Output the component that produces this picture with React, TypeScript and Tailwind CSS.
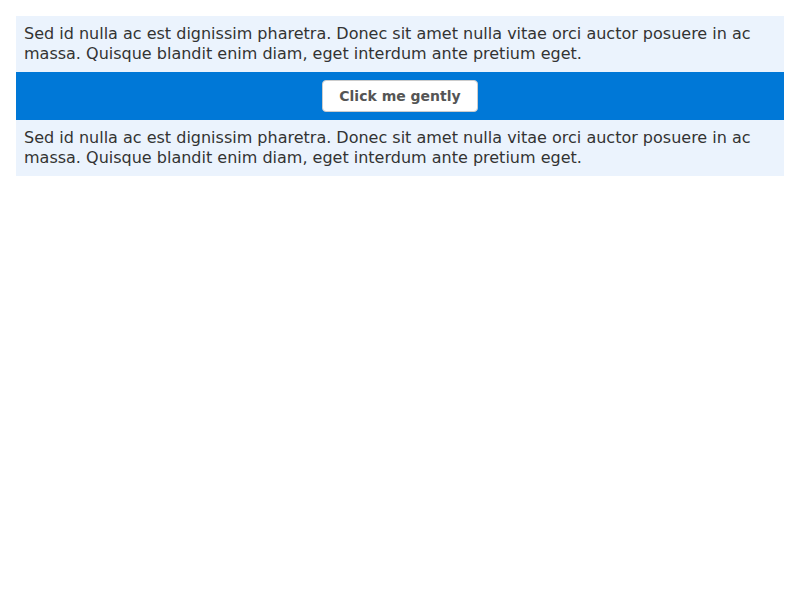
const text =
  'Sed id nulla ac est dignissim pharetra. Donec sit amet nulla vitae orci auctor posuere in ac massa. Quisque blandit enim diam, eget interdum ante pretium eget.';

export default function App() {
  return (
    <div className="p-4 font-['DejaVu_Sans',sans-serif]">
      <p className="bg-[#ebf3fd] px-2 py-2 text-base leading-5 text-[#333]">{text}</p>
      <div className="flex h-12 items-center justify-center bg-[#0078d7]">
        <button className="h-8 w-[156px] rounded border border-[#ccc] bg-white text-sm font-bold text-[#555]">
          Click me gently
        </button>
      </div>
      <p className="bg-[#ebf3fd] px-2 py-2 text-base leading-5 text-[#333]">{text}</p>
    </div>
  );
}
